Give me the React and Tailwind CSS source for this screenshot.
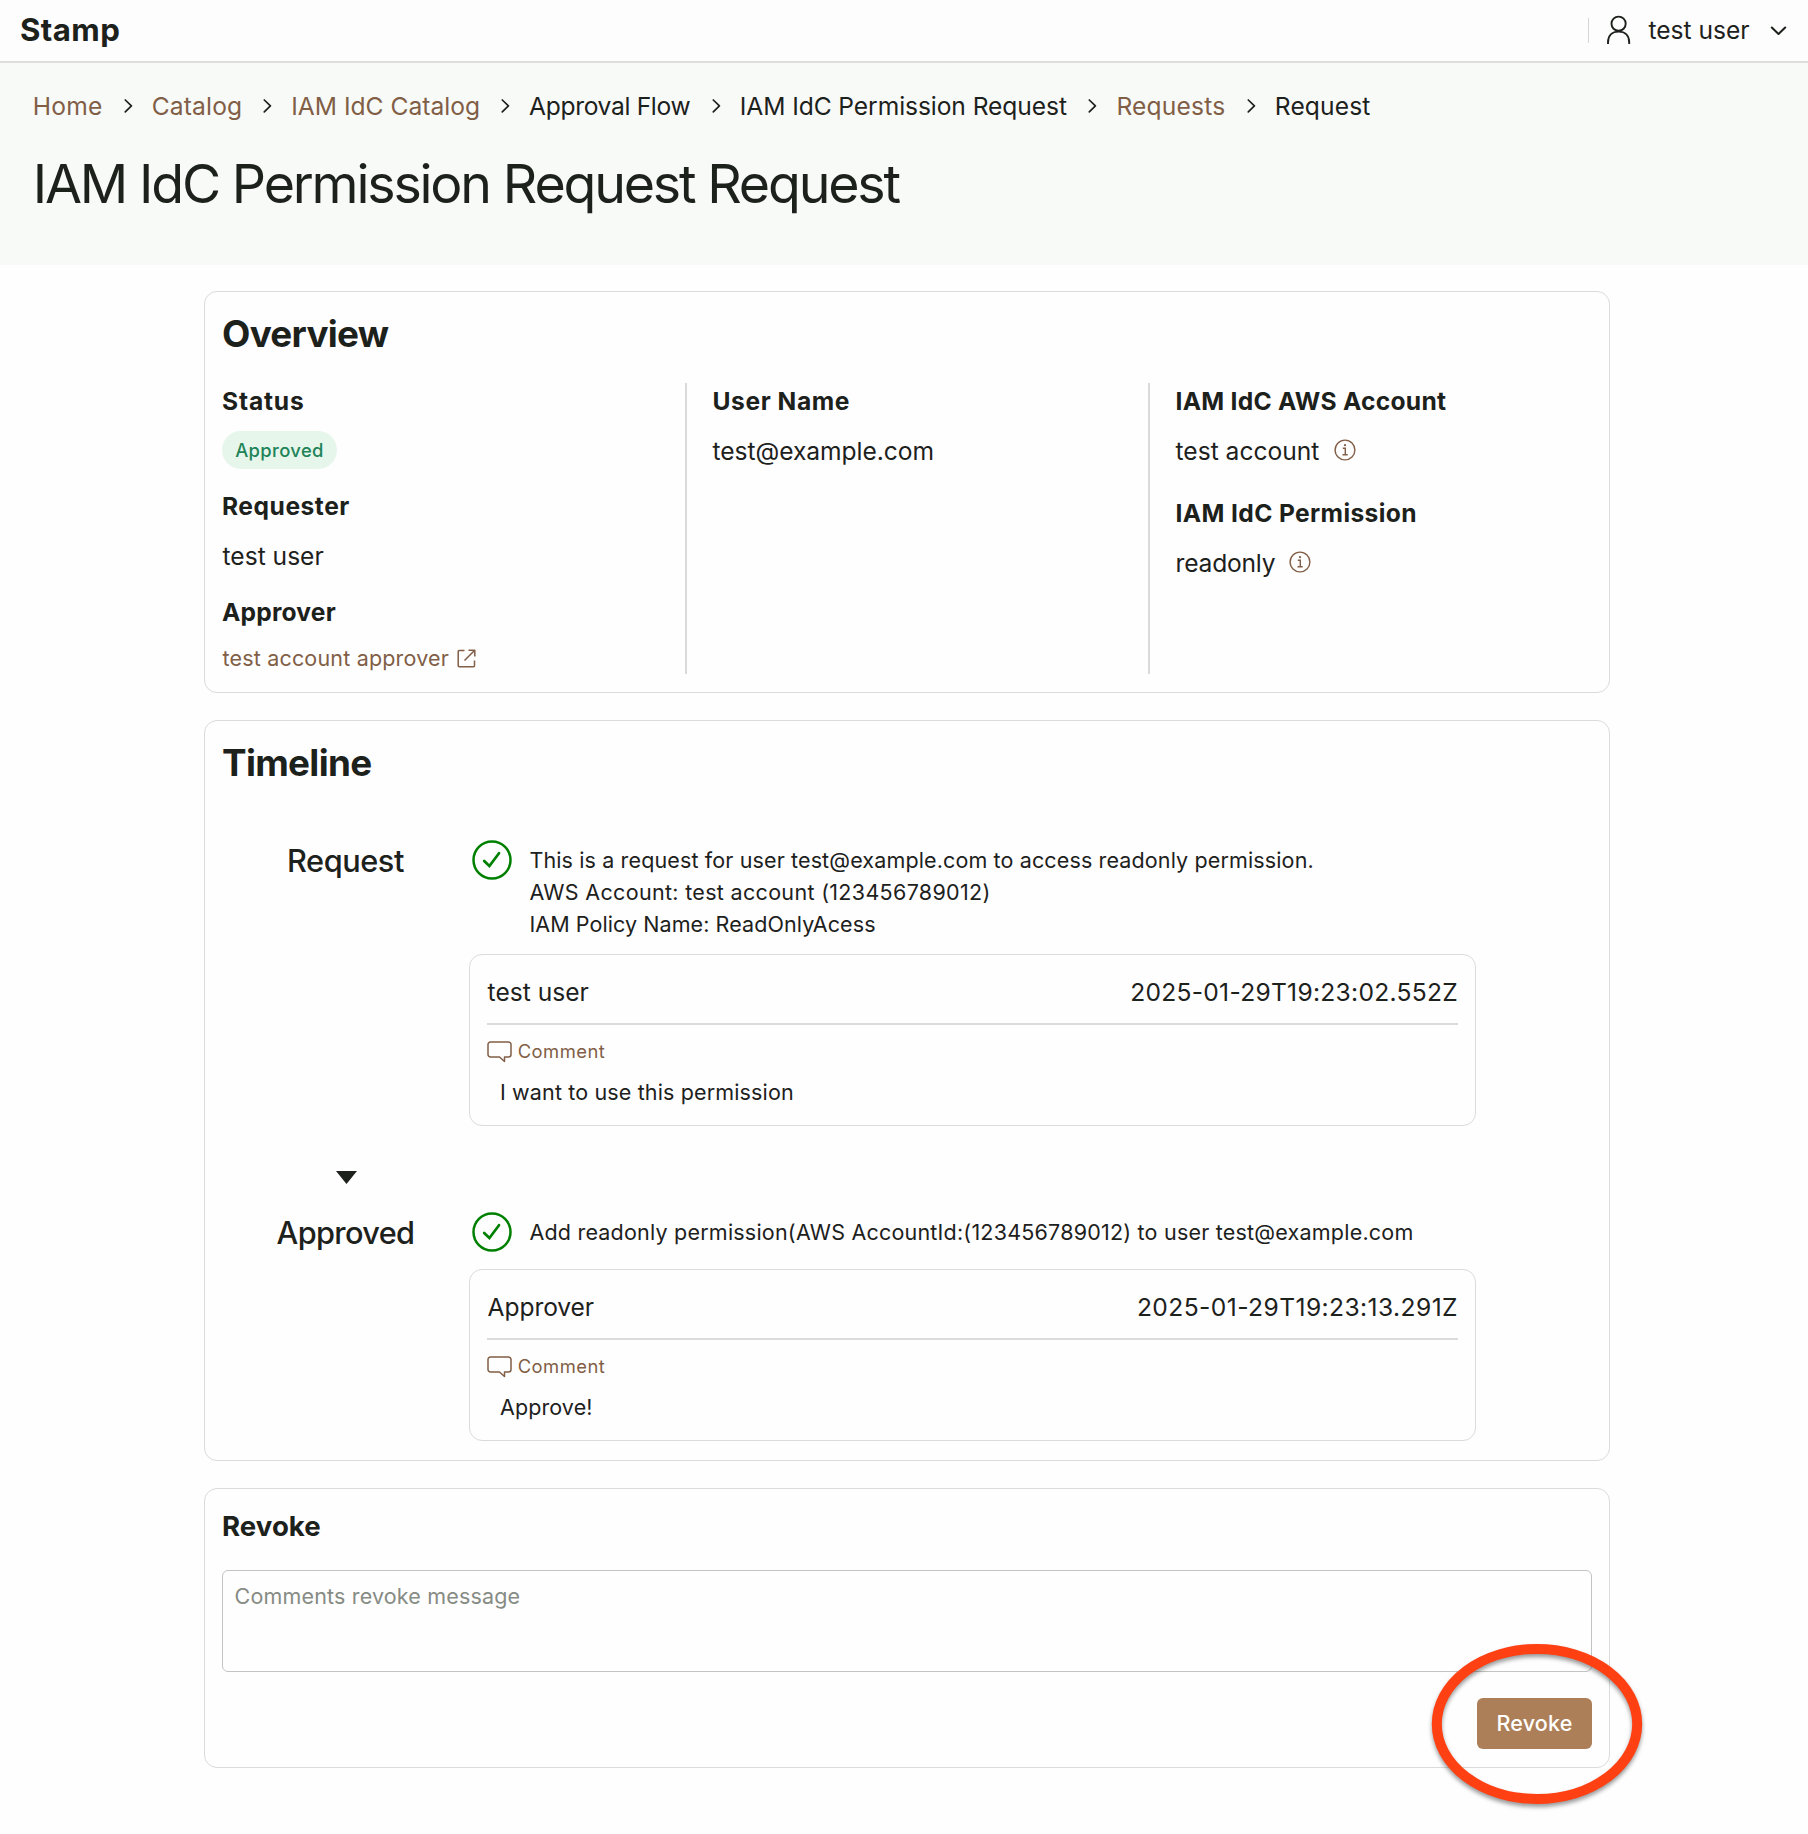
import clsx from "clsx";

function Chevron({ className }) {
  return (
    <svg className={clsx("mr-[19px] h-[14px] w-[9px] shrink-0", className)} viewBox="0 0 9 14" fill="none" stroke="#1d211c" strokeWidth="1.7" strokeLinecap="round" strokeLinejoin="round">
      <path d="M1.3 1 7.4 6.9 1.3 12.9" />
    </svg>
  );
}

function UserIcon() {
  return (
    <svg className="h-[30px] w-[26px]" viewBox="0 0 26 30" fill="none" stroke="#1d211c" strokeWidth="1.9">
      <circle cx="12.6" cy="8.7" r="7.1" />
      <path d="M2 29v-1.6c0-6.8 4.1-10.800 10.600-10.800s10.600 4 10.600 10.800V29" />
    </svg>
  );
}

function InfoIcon() {
  return (
    <svg className="-mt-[2px] h-[22px] w-[22px]" viewBox="0 0 22 22" fill="none" stroke="#815e46" strokeWidth="1.4">
      <circle cx="11" cy="11" r="9.9" />
      <path d="M8.800 9.200H11.300V15.800M8.500 15.800H13.700" />
      <circle cx="11" cy="6.200" r="1.100" fill="#815e46" stroke="none" />
    </svg>
  );
}

function ExternalIcon() {
  return (
    <svg className="h-[19px] w-[19px]" viewBox="0 0 19 19" fill="none" stroke="#815e46" strokeWidth="1.5" strokeLinejoin="round">
      <path d="M7.500 1.500H2.200a1 1 0 0 0-1 1V16.800a1 1 0 0 0 1 1H16.500a1 1 0 0 0 1-1V11.500M11.500 1.200H17.800V7.500M17.500 1.500 7.500 11.500" />
    </svg>
  );
}

function CheckIcon() {
  return (
    <svg className="h-10 w-10 shrink-0" viewBox="0 0 40 40" fill="none" stroke="#008000" strokeWidth="2.500">
      <circle cx="20" cy="20" r="18.500" />
      <path d="M12.200 21 17.400 26 27 13.200" strokeWidth="2.700" strokeLinecap="round" />
    </svg>
  );
}

function CommentIcon() {
  return (
    <svg className="mt-[2px] h-[22px] w-[25px] shrink-0" viewBox="0 0 25 22" fill="none" stroke="#815e46" strokeWidth="1.500" strokeLinejoin="round">
      <path d="M3.500 1H21.500A2.500 2.500 0 0 1 24 3.500V13.500A2.500 2.500 0 0 1 21.500 16H17.500V20.500L12.500 16H3.500A2.500 2.500 0 0 1 1 13.500V3.500A2.500 2.500 0 0 1 3.500 1Z" />
    </svg>
  );
}

const crumbs = [
  { text: "Home", link: true, track: "tracking-[0.28px]" },
  { text: "Catalog", link: true, track: "tracking-[0.14px]" },
  { text: "IAM IdC Catalog", link: true, track: "tracking-[0px]" },
  { text: "Approval Flow", track: "tracking-[-0.33px]" },
  { text: "IAM IdC Permission Request", track: "tracking-[-0.08px]" },
  { text: "Requests", link: true, track: "tracking-[0.18px]" },
  { text: "Request", track: "tracking-[0.11px]" },
];

function Card({ className, children }) {
  return <section className={clsx("rounded-[13px] border border-[#d9dcd9] bg-[#fefefe] px-[17px]", className)}>{children}</section>;
}

function Label({ className, children }) {
  return <dt className={clsx("text-[24.6px] leading-[32px] font-bold whitespace-nowrap", className)}>{children}</dt>;
}

function Step({ title, titleTrack, lines, lineTracks, name, nameTrack, date, dateTrack, comment, commentTrack }) {
  return (
    <div className="flex">
      <h3 className={clsx("w-[247px] text-center text-[30.7px] leading-[41px] font-medium", titleTrack)}>{title}</h3>
      <div className="w-[1007px]">
        <div className="ml-[3px] flex items-start">
          <CheckIcon />
          <div className="mt-1 ml-[17.4px] text-[21.5px] leading-[32px] whitespace-nowrap">
            {lines.map((line, i) => (
              <p key={line} className={lineTracks[i]}>{line}</p>
            ))}
          </div>
        </div>
        <div className={clsx("h-[172px] rounded-[13px] border border-[#d9dcd9] px-[17px] pt-[21px]", lines.length > 1 ? "mt-[14px]" : "mt-[17px]")}>
          <div className="flex h-[49px] justify-between border-b-2 border-[#dadbda] pl-[0.6px] text-[24.6px] leading-[32px]">
            <span className={nameTrack}>{name}</span>
            <span className={dateTrack}>{date}</span>
          </div>
          <div className="mt-[14px] flex h-6 items-center text-[#815e46]">
            <CommentIcon />
            <span className="ml-[5.7px] text-[18.4px] leading-6 tracking-[0.47px]">Comment</span>
          </div>
          <p className={clsx("mt-[13px] pl-[13px] text-[21.5px] leading-[32px]", commentTrack)}>{comment}</p>
        </div>
      </div>
    </div>
  );
}

export default function App() {
  return (
    <div className="min-h-[1834px] w-[1808px] overflow-hidden bg-[#fefefe] font-['Inter',sans-serif] text-[#1d211c]">
      <header className="flex h-[63px] items-center justify-between border-b-2 border-[#dededd] bg-[#fdfdfd] pr-[21.4px] pb-px pl-5">
        <div className="text-[31.2px] leading-[40px] font-bold tracking-[0.4px]">Stamp</div>
        <div className="flex items-center">
          <div className="h-[25px] w-px bg-[#d5d5d5]" />
          <div className="ml-[17px]"><UserIcon /></div>
          <span className="ml-4 text-[24.6px] leading-[32px]">test user</span>
          <svg className="mt-[2px] ml-[20px] h-[10px] w-[17px]" viewBox="0 0 17 10" fill="none" stroke="#1d211c" strokeWidth="2" strokeLinecap="round" strokeLinejoin="round">
            <path d="M1.800 1.500 8.500 8 15.200 1.500" />
          </svg>
        </div>
      </header>

      <div className="h-[202px] bg-[#f8faf8] px-[32.7px] pt-[27px]">
        <nav className="flex h-8 items-center text-[24.6px] leading-[32px] whitespace-nowrap">
          {crumbs.map((c, i) => (
            <div key={c.text} className="flex items-center">
              {i > 0 && <Chevron className={i > 3 ? "ml-[21.5px]" : "ml-[21px]"} />}
              <span className={clsx(c.track, c.link && "text-[#815e46]")}>{c.text}</span>
            </div>
          ))}
        </nav>
        <h1 className="mt-[30px] text-[53.7px] leading-[64px] tracking-[-2.19px]">IAM IdC Permission Request Request</h1>
      </div>

      <main className="mt-[26px] ml-[204px] flex w-[1406px] flex-col gap-[27px]">
        <Card className="h-[402px] pt-5">
          <h2 className="text-[36.8px] leading-[44px] font-bold tracking-[-0.7px]">Overview</h2>
          <div className="mt-[27px] grid h-[291px] grid-cols-[463px_463px_1fr] pt-px">
            <dl className="pt-px">
              <Label className="tracking-[0.83px]">Status</Label>
              <dd className="mt-[14px] h-[38px] w-[115px] rounded-full bg-[#e6f6eb] text-center text-[18.4px] leading-[38px] font-medium tracking-[0.38px] text-[#218358]">Approved</dd>
              <Label className="mt-[21px] tracking-[0.52px]">Requester</Label>
              <dd className="mt-[18px] pl-[0.5px] text-[24.6px] leading-[32px]">test user</dd>
              <Label className="mt-6 tracking-[0.19px]">Approver</Label>
              <dd className="mt-[14px] flex items-center pl-[0.5px] text-[21.5px] leading-[32px] tracking-[0.18px] text-[#815e46]">
                test account approver
                <span className="ml-2"><ExternalIcon /></span>
              </dd>
            </dl>
            <dl className="-mt-px border-l-2 border-[#d9dad9] pt-[2px] pl-[25.5px]">
              <Label className="tracking-[0.57px]">User Name</Label>
              <dd className="mt-[18px] text-[24.6px] leading-[32px] tracking-[-0.05px]">test@example.com</dd>
            </dl>
            <dl className="-mt-px border-l-2 border-[#d9dad9] pt-[2px] pl-[25.5px]">
              <Label className="tracking-[0.26px]">IAM IdC AWS Account</Label>
              <dd className="mt-[18px] flex items-center text-[24.6px] leading-[32px]">
                test account
                <span className="ml-[15px]"><InfoIcon /></span>
              </dd>
              <Label className="mt-[30px] tracking-[0.37px]">IAM IdC Permission</Label>
              <dd className="mt-[18px] flex items-center text-[24.6px] leading-[32px] tracking-[-0.2px]">
                readonly
                <span className="ml-[14px]"><InfoIcon /></span>
              </dd>
            </dl>
          </div>
        </Card>

        <Card className="h-[741px] pt-5">
          <h2 className="text-[36.8px] leading-[44px] font-bold tracking-[-0.67px]">Timeline</h2>
          <div className="mt-[55px]">
            <Step
              title="Request"
              titleTrack="tracking-[-0.45px]"
              lines={[
                "This is a request for user test@example.com to access readonly permission.",
                "AWS Account: test account (123456789012)",
                "IAM Policy Name: ReadOnlyAcess",
              ]}
              lineTracks={["tracking-[0.13px]", "tracking-[0.32px]", "tracking-[0.08px]"]}
              name="test user"
              nameTrack="tracking-[0px]"
              date="2025-01-29T19:23:02.552Z"
              dateTrack="tracking-[0.28px]"
              comment="I want to use this permission"
              commentTrack="tracking-[0.14px]"
            />
            <div className="mt-[45px] mb-7 flex w-[248px] justify-center">
              <svg className="h-[13px] w-[21px]" viewBox="0 0 21 13" fill="#1d211c">
                <path d="M0 0H21L10.500 13Z" />
              </svg>
            </div>
            <Step
              title="Approved"
              titleTrack="tracking-[-0.64px]"
              lines={["Add readonly permission(AWS AccountId:(123456789012) to user test@example.com"]}
              lineTracks={["tracking-[0.21px]"]}
              name="Approver"
              nameTrack="tracking-[-0.1px]"
              date="2025-01-29T19:23:13.291Z"
              dateTrack="tracking-[0.42px]"
              comment="Approve!"
              commentTrack="tracking-[0.1px]"
            />
          </div>
        </Card>

        <Card className="h-[280px] pt-[19px]">
          <h3 className="text-[27.6px] leading-[36px] font-bold tracking-[0.04px]">Revoke</h3>
          <textarea
            className="mt-[26px] block h-[102px] w-full resize-none rounded-[6px] border border-[#c2c4c2] bg-transparent px-[11.5px] py-[9px] text-[21.5px] leading-[32px] tracking-[0.17px] placeholder:text-[#868b84]"
            placeholder="Comments revoke message"
          />
          <div className="mt-[26px] flex justify-end">
            <div className="relative">
              <button className="block h-[51px] w-[115px] rounded-[6px] bg-[#ad7f58] text-[21.5px] font-medium tracking-[0.2px] text-white">Revoke</button>
              <svg className="absolute -top-[64px] -left-[53px] h-[180px] w-[226px] drop-shadow-[0_3px_2px_rgba(0,0,0,0.4)]" viewBox="0 0 226 180" fill="none" stroke="#ff4013" strokeWidth="10">
                <ellipse cx="113" cy="90" rx="100.200" ry="75" />
              </svg>
            </div>
          </div>
        </Card>
      </main>
    </div>
  );
}
